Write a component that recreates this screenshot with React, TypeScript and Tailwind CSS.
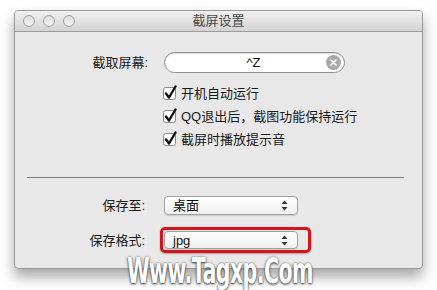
import React from "react";

const font = { fontFamily: '"Liberation Sans", "Noto Sans CJK SC", sans-serif' };

function Check({ label }: { label: string }) {
  return <div className="flex h-[23px] items-center">
    <svg width="16" height="16" viewBox="0 0 16 16" className="-mt-[2px] shrink-0">
      <rect x="0.5" y="2.5" width="12" height="12" rx="2" fill="#fff" stroke="#8a8a8a" />
      <path d="M3 8.5 L6 12.5 L12.5 1.5" fill="none" stroke="#111" strokeWidth="2.4" strokeLinecap="round" strokeLinejoin="round" />
    </svg>
    <span className="ml-[2px] text-[13px] text-[#1a1a1a]">{label}</span>
  </div>;
}

function Arrows() {
  return <svg width="7" height="11" viewBox="0 0 7 11" className="shrink-0">
    <path d="M3.5 0.5 L6.5 4 H0.5 Z" fill="#333" />
    <path d="M3.5 10.5 L6.5 7 H0.5 Z" fill="#333" />
  </svg>;
}

function Popup({ value, h }: { value: string; h: string }) {
  return <div className={`flex w-[134px] ${h} items-center justify-between rounded-[4px] border border-[#a0a0a0] bg-gradient-to-b from-[#ffffff] to-[#f0f0f0] pl-[8px] pr-[9px] shadow-[0_1px_1px_rgba(0,0,0,0.12)]`}>
    <span className="text-[13px] text-[#111]">{value}</span>
    <Arrows />
  </div>;
}

export default function App() {
  return <div className="relative h-[290px] w-[437px] overflow-hidden bg-white" style={font}>
    <div className="ml-[14px] mt-[10px] flex h-[259px] w-[409px] flex-col overflow-hidden rounded-[4px] border border-[#9a9a9a] bg-[#e8e8e8] shadow-[0_8px_14px_rgba(0,0,0,0.35)]">
      <div className="relative flex h-[21px] shrink-0 items-center justify-center border-b border-[#9c9c9c] bg-gradient-to-b from-[#f0f0f0] to-[#d4d4d4]">
        <div className="absolute left-[8px] top-[4px] flex gap-[8px]">
          {[0, 1, 2].map(i => <span key={i} className="h-[12px] w-[12px] rounded-full border border-[#9d9d9d] bg-gradient-to-b from-[#dcdcdc] to-[#f4f4f4]" />)}
        </div>
        <span className="text-[13px] text-[#4a4a4a]">截屏设置</span>
      </div>

      <div className="flex flex-1 flex-col pt-[20px]">
        <div className="flex h-[21px] items-center">
          <span className="w-[135px] pr-[2px] text-right text-[13px] text-[#1a1a1a]">截取屏幕:</span>
          <div className="ml-[14px] flex h-[21px] w-[181px] items-center justify-between rounded-full border border-[#8e8e8e] bg-white pl-[16px] pr-[3px] shadow-[inset_0_1px_1px_rgba(0,0,0,0.15)]">
            <span className="flex-1 text-center text-[13px] text-[#111]">^Z</span>
            <span className="flex h-[15px] w-[15px] items-center justify-center rounded-full bg-[#a9a9a9]">
              <svg width="7" height="7" viewBox="0 0 7 7"><path d="M1 1 L6 6 M6 1 L1 6" stroke="#fff" strokeWidth="1.6" strokeLinecap="round" /></svg>
            </span>
          </div>
        </div>

        <div className="ml-[148px] mt-[9px] flex flex-col">
          <Check label="开机自动运行" />
          <Check label="QQ退出后，截图功能保持运行" />
          <Check label="截屏时播放提示音" />
        </div>

        <div className="ml-[12px] mr-[18px] mt-[26px] h-px bg-[#7c7c7c]" />

        <div className="mt-[18px] flex items-center">
          <span className="w-[130px] text-right text-[13px] text-[#1a1a1a]">保存至:</span>
          <div className="ml-[19px]"><Popup value="桌面" h="h-[19px]" /></div>
        </div>

        <div className="mt-[15px] flex items-center">
          <span className="w-[130px] text-right text-[13px] text-[#1a1a1a]">保存格式:</span>
          <div className="relative ml-[19px]">
            <Popup value="jpg" h="h-[18px]" />
            <div className="absolute -left-[4px] -top-[4px] h-[26px] w-[151px] rounded-[5px] border-[3px] border-[#d3141c] shadow-[0_1px_2px_rgba(0,0,0,0.3)]" />
          </div>
        </div>
      </div>
    </div>

    <div className="absolute left-[127px] top-[253px] whitespace-nowrap text-[36px] font-bold leading-none tracking-[-1px] text-white [transform-origin:left_top] [transform:scaleX(0.57)] [text-shadow:0_0_2px_#555,0_1px_3px_#333]" style={{ fontFamily: '"DejaVu Sans", sans-serif' }}>
      Www.Tagxp.Com
    </div>
  </div>;
}
